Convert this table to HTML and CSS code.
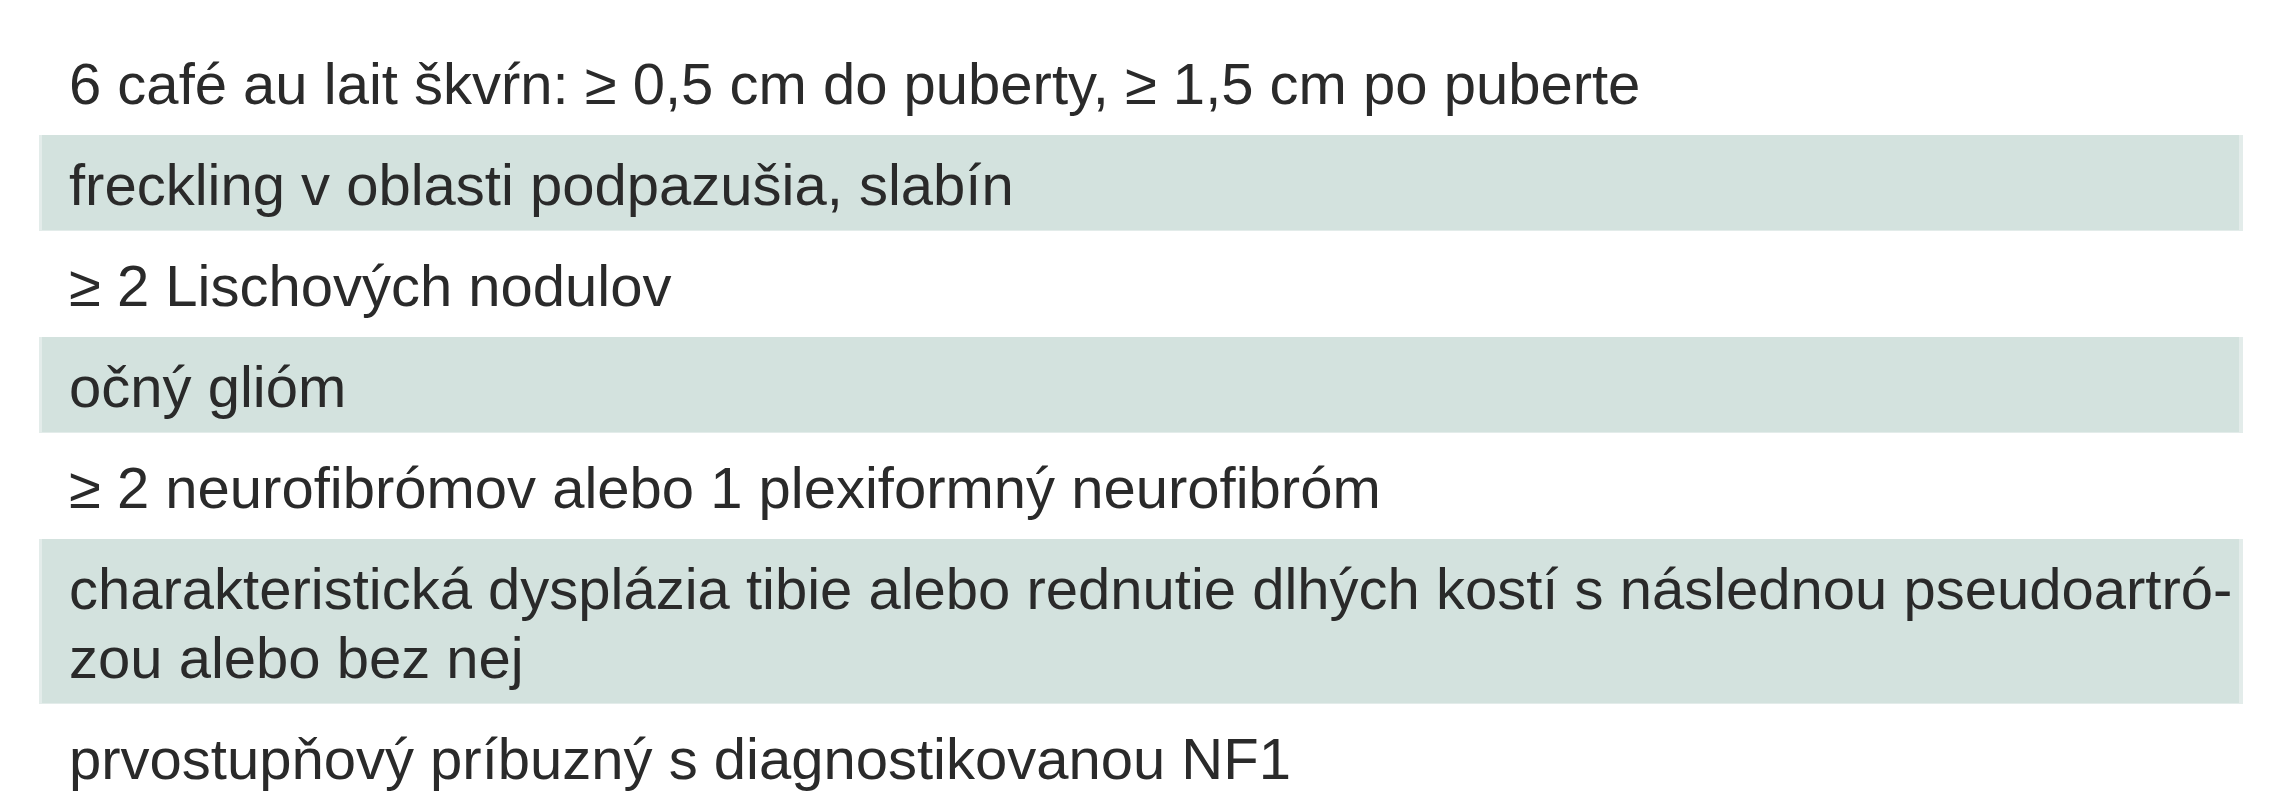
FILE: index.html
```html
<!DOCTYPE html>
<html lang="sk">
<head>
<meta charset="utf-8">
<title>Diagnostické kritériá NF1</title>
<link rel="stylesheet" href="styles.css">
</head>
<body>
<div class="criteria">
  <div class="row">6 café au lait škvŕn: ≥ 0,5 cm do puberty, ≥ 1,5 cm po puberte</div>
  <div class="row shaded">freckling v oblasti podpazušia, slabín</div>
  <div class="row">≥ 2 Lischových nodulov</div>
  <div class="row shaded">očný glióm</div>
  <div class="row">≥ 2 neurofibrómov alebo 1 plexiformný neurofibróm</div>
  <div class="row shaded">charakteristická dysplázia tibie alebo rednutie dlhých kostí s následnou pseudoartró-<br>zou alebo bez nej</div>
  <div class="row">prvostupňový príbuzný s diagnostikovanou NF1</div>
</div>
</body>
</html>
```
FILE: styles.css
```css
html, body {
  margin: 0;
  padding: 0;
  background: #ffffff;
}

body {
  font-family: "Liberation Sans", Arial, sans-serif;
  color: #2a2a2a;
  overflow: hidden;
}

.criteria {
  display: flex;
  flex-direction: column;
  gap: 5px;
  width: 2204px;
  margin-left: 39px;
  padding-top: 34px;
}

.row {
  font-size: 58px;
  line-height: 69px;
  padding: 15px 30px 12px 30px;
  white-space: nowrap;
}

.shaded {
  background: #d3e2de;
  box-shadow: inset 3px 0 0 #e3ecea, inset -4px 0 0 #e3ecea, inset 0 -1px 0 #e3ecea;
}
```
